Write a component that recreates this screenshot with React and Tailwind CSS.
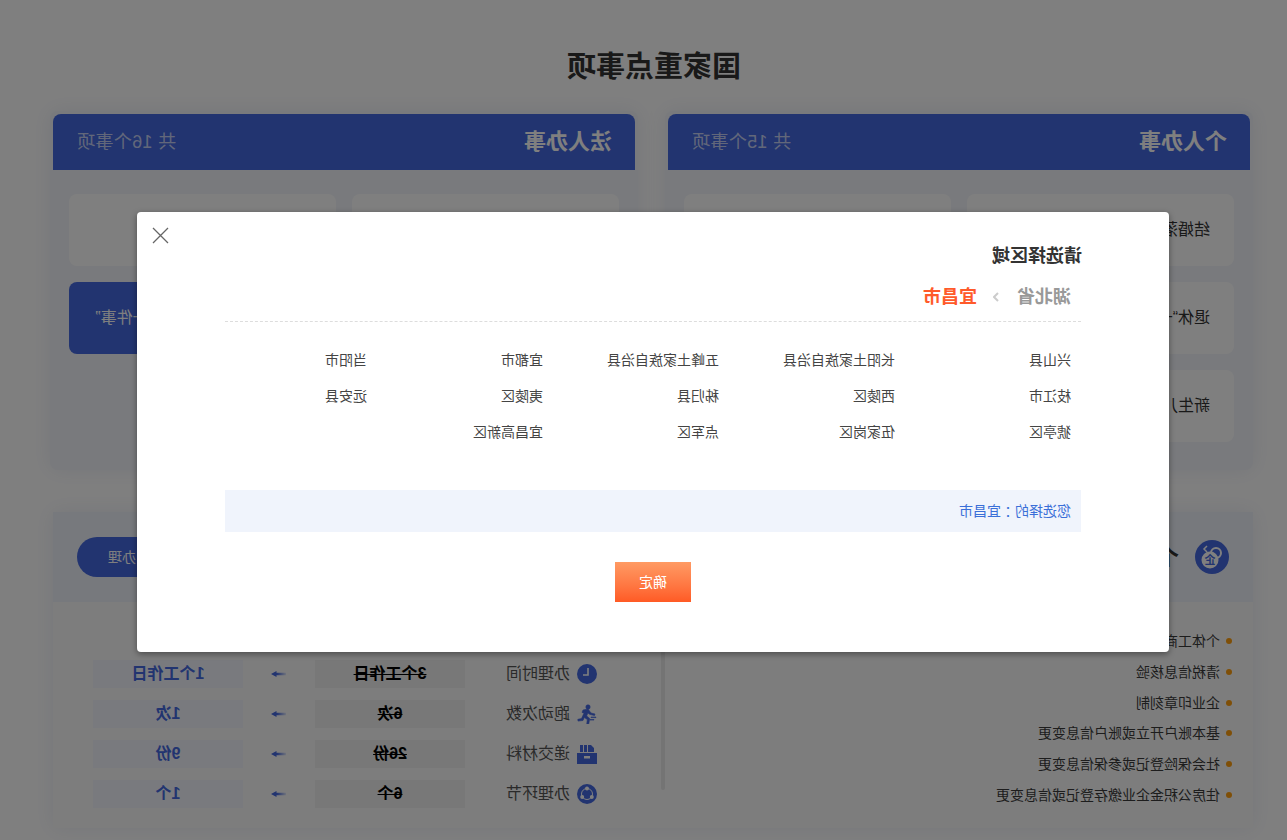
import React from "react";

const personalItems = ["结婚落户“一件事”", "扶残助困“一件事”", "退休“一件事”", "公民身后“一件事”", "新生儿出生“一件事”", ""];

const areas = [
  "兴山县", "长阳土家族自治县", "五峰土家族自治县", "宜都市", "当阳市",
  "枝江市", "西陵区", "秭归县", "夷陵区", "远安县",
  "猇亭区", "伍家岗区", "点军区", "宜昌高新区",
];

const steps = [
  "个体工商户信息变更",
  "清税信息核验",
  "企业印章刻制",
  "基本账户开立或账户信息变更",
  "社会保险登记或参保信息变更",
  "住房公积金企业缴存登记或信息变更",
];

const compare = [
  { label: "办理时间", before: "3个工作日", after: "1个工作日", icon: <ClockIcon /> },
  { label: "跑动次数", before: "6次", after: "1次", icon: <RunIcon /> },
  { label: "递交材料", before: "26份", after: "9份", icon: <BagIcon /> },
  { label: "办理环节", before: "6个", after: "1个", icon: <NodesIcon /> },
];

function ClockIcon() {
  return (
    <svg width="20" height="20" viewBox="0 0 20 20">
      <circle cx="10" cy="10" r="10" fill="#4468e0" />
      <path d="M9 4v7h5" fill="none" stroke="#fff" strokeWidth="1.6" />
    </svg>
  );
}

function RunIcon() {
  return (
    <svg width="20" height="20" viewBox="0 0 20 20" fill="#4468e0" stroke="#4468e0" strokeWidth="0.6">
      <g transform="translate(20 0) scale(-1 1)">
        <circle cx="11" cy="3" r="2.2" />
        <path d="M6 6l5-1 3 4 4 1-.5 1.600-5-1.300-1.600-1.400-1.200 3 3 2.600-1 6h-2l.6-5-3-2-1.300 3-5 .6-.2-1.800 3.700-.7L7.500 8 6.800 9 5 8.400z" />
        <path d="M14 13h5v.6h-5zM13 15.500h4v.6h-4z" />
      </g>
    </svg>
  );
}

function BagIcon() {
  return (
    <svg width="20" height="20" viewBox="0 0 20 20" fill="#4468e0">
      <g transform="translate(20 0) scale(-1 1)">
        <path d="M3 1h3v7H3zM7 1h3v7H7zM11 1h3l3 3v4h-6z" />
        <path d="M0 9h20v11H0z" />
        <rect x="7" y="12" width="6" height="2.500" fill="#fff" />
      </g>
    </svg>
  );
}

function NodesIcon() {
  return (
    <svg width="20" height="20" viewBox="0 0 20 20">
      <circle cx="10" cy="10" r="10" fill="#4468e0" />
      <circle cx="10" cy="10" r="5.500" fill="none" stroke="#fff" strokeWidth="1" />
      <circle cx="10" cy="4.500" r="2" fill="#fff" />
      <circle cx="5.200" cy="13" r="2" fill="#fff" />
      <circle cx="14.800" cy="13" r="2" fill="#fff" />
    </svg>
  );
}

function CoinIcon() {
  return (
    <svg width="34" height="34" viewBox="0 0 34 34">
      <circle cx="17" cy="17" r="17" fill="#4468e0" />
      <circle cx="13" cy="13" r="5" fill="none" stroke="#fff" strokeWidth="2" />
      <circle cx="19" cy="20" r="8.500" fill="#fff" />
      <path d="M22 6l3 3-3 3" fill="none" stroke="#fff" strokeWidth="1.500" />
      <text x="19" y="24" textAnchor="middle" fontSize="11" fontWeight="700" fill="#4468e0">企</text>
    </svg>
  );
}

function Arrow() {
  return (
    <svg width="15" height="6" viewBox="0 0 15 6">
      <defs>
        <linearGradient id="arrowFade" x1="0" x2="1" y1="0" y2="0">
          <stop offset="0" stopColor="#4468e0" stopOpacity="0.15" />
          <stop offset="0.6" stopColor="#4468e0" />
        </linearGradient>
      </defs>
      <path d="M0 1.800h9.500V0L15 3 9.500 6V4.200H0z" fill="url(#arrowFade)" />
    </svg>
  );
}

function Panel({ title, count, children }) {
  return (
    <div className="rounded-lg bg-[#f2f4fa] p-[3px] pb-[28px] shadow-[0_0_20px_rgba(60,80,160,0.1)]">
      <div className="flex h-14 items-center justify-between rounded-t-lg bg-[#4468e0] pl-[23px] pr-6">
        <h2 className="mb-[2px] text-[22px] font-bold text-white">{title}</h2>
        <span className="text-lg tracking-[0.3px] text-white/70">{count}</span>
      </div>
      {children}
    </div>
  );
}

export default function App() {
  return (
    <div className="relative h-[840px] w-[1287px] -scale-x-100 overflow-hidden bg-white font-['Liberation_Sans','Noto_Sans_CJK_SC',sans-serif] text-[#333]">
      <h1 className="w-[1266px] pt-[45px] text-center text-[29px] font-bold leading-[44px] text-[#333]">国家重点事项</h1>

      <div className="mt-[22px] ml-[34px] grid w-[1203px] grid-cols-2 gap-[27px]">
        <Panel title="个人办事" count="共 15个事项">
          <div className="grid grid-cols-[267px_267px] gap-4 px-4 pt-6">
            {personalItems.map((t, i) => (
              <div key={i} className="flex h-[72px] items-center rounded-lg bg-white pl-6 text-base">{t}</div>
            ))}
          </div>
        </Panel>
        <Panel title="法人办事" count="共 16个事项">
          <div className="grid grid-cols-[267px_267px] gap-4 px-4 pt-6">
            <div className="flex h-[72px] items-center rounded-lg bg-white pl-6 text-base">企业信息变更“一件事”</div>
            <div className="flex h-[72px] items-center rounded-lg bg-white pl-6 text-base">开办运输企业“一件事”</div>
            <div className="flex h-[72px] items-center rounded-lg bg-white pl-6 text-base">企业注销登记“一件事”</div>
            <div className="flex h-[72px] items-center rounded-lg bg-[#4468e0] pl-[22px] text-base text-white">企业上市合法合规核查“一件事”</div>
            <div className="h-[72px] rounded-lg bg-white" />
          </div>
        </Panel>
      </div>

      <div className="mt-[42px] ml-[34px] w-[1200px] bg-[#fbfbfb] shadow-[0_0_20px_rgba(60,80,160,0.1)]">
        <div className="flex h-[90px] items-center justify-between bg-[#eff2fa] px-6">
          <div className="flex items-center gap-4">
            <CoinIcon />
            <span className="text-[22px] font-bold">个体工商户开业</span>
          </div>
          <button className="h-10 w-[118px] rounded-full bg-[#4468e0] text-sm text-white">立即办理</button>
        </div>
        <div className="flex h-[226px] pt-[8px]">
          <ul className="flex w-[588px] flex-col gap-[10.800px] pl-[21px] pt-[21px]">
            {steps.map((s) => (
              <li key={s} className="flex h-5 items-center gap-[6px] text-sm text-[#3a3a3a]">
                <span className="h-[6px] w-[6px] rounded-full bg-[#ff9f0f]" />
                {s}
              </li>
            ))}
          </ul>
          <div className="h-[180px] w-1 rounded-sm bg-[#e8e8e8]" />
          <div className="flex flex-col gap-3 pl-[64px] pt-[50px]">
            {compare.map((row) => (
              <div key={row.label} className="flex h-7 items-center">
                <span className="flex w-[20px] items-center">{row.icon}</span>
                <span className="ml-[7px] w-[105px] text-base text-[#555]">{row.label}</span>
                <span className="flex h-7 w-[150px] items-center justify-center bg-[#f0f0f0] text-base font-bold text-black line-through">{row.before}</span>
                <span className="flex w-[72px] justify-center"><Arrow /></span>
                <span className="flex h-7 w-[150px] items-center justify-center bg-[#f2f5fd] text-base font-bold text-[#4468e0]">{row.after}</span>
              </div>
            ))}
          </div>
        </div>
      </div>

      <div className="absolute inset-0 bg-black/50">
        <div className="relative mt-[212px] ml-[118px] h-[440px] w-[1032px] rounded-sm bg-white px-[88px] pt-[32px] shadow-[0_2px_6px_rgba(0,0,0,0.4)]">
          <button className="absolute top-[15px] right-[15px] text-[#666]">
            <svg width="17" height="17" viewBox="0 0 17 17" fill="none" stroke="currentColor" strokeWidth="1.300">
              <path d="M1 1l15 15M16 1L1 16" />
            </svg>
          </button>
          <h3 className="-ml-px text-lg font-bold leading-[24px] text-[#333]">请选择区域</h3>
          <div className="mt-[17px] flex h-[24px] items-center pl-[10px] text-lg font-bold leading-[24px]">
            <span className="text-[#999]">湖北省</span>
            <svg className="ml-[18px]" width="6" height="10" viewBox="0 0 6 10" fill="none" stroke="#ccc" strokeWidth="2">
              <path d="M1 1l4 4-4 4" />
            </svg>
            <span className="ml-[16px] text-[#ff5a2a]">宜昌市</span>
          </div>
          <div className="mt-[12px] border-b border-dashed border-[#ddd]" />
          <div className="mt-[20px] grid w-[890px] grid-cols-5 pl-[10px] text-sm">
            {areas.map((a) => (
              <div key={a} className="h-9 leading-[36px] text-[#444]">{a}</div>
            ))}
          </div>
          <div className="mt-[40px] flex h-[42px] items-center bg-[#f0f4fc] pl-[10px] text-sm text-[#3a6fd8]">
            您选择的<span className="font-['Noto_Sans_CJK_TC',sans-serif]">：</span>宜昌市
          </div>
          <div className="mt-[30px] flex justify-center">
            <button className="h-10 w-[76px] bg-gradient-to-b from-[#ff9a63] to-[#ff5a24] text-sm text-white">确定</button>
          </div>
        </div>
      </div>
    </div>
  );
}
